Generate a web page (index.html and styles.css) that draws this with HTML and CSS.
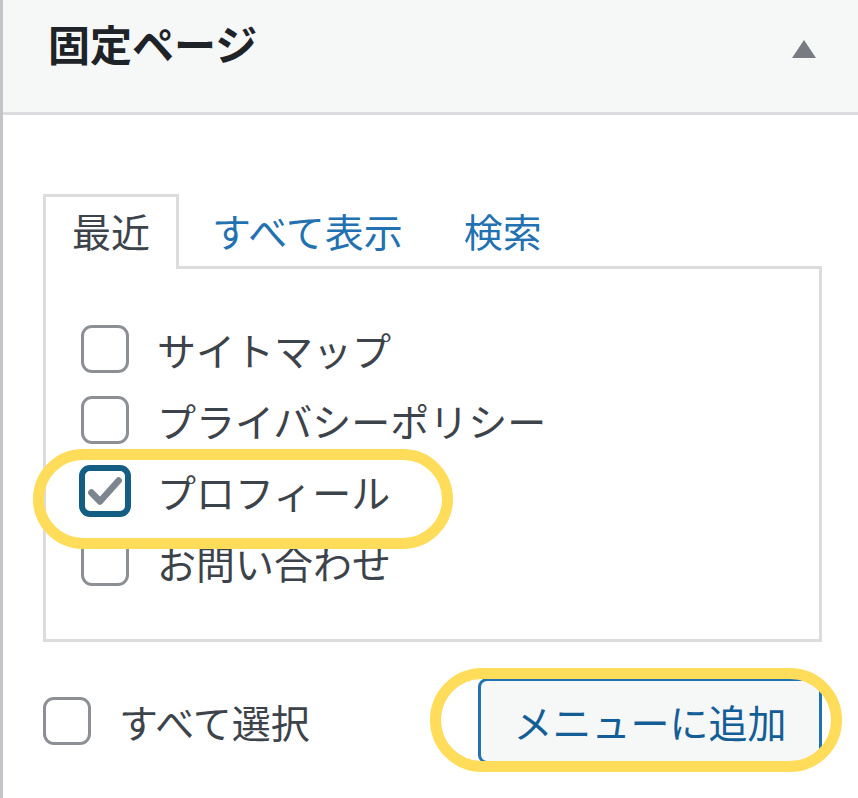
FILE: index.html
```html
<!DOCTYPE html>
<html lang="ja">
<head>
    <meta charset="UTF-8">
    <meta name="viewport" content="width=device-width, initial-scale=1.0">
    <title>固定ページ</title>
    <link rel="stylesheet" href="styles.css">
</head>
<body>
    <div class="postbox">
        <div class="postbox-header">
            <h2>固定ページ</h2>
            <span class="toggle"></span>
        </div>

        <div class="inside">
            <ul class="tabs">
                <li class="tab active">最近</li>
                <li class="tab"><a href="#">すべて表示</a></li>
                <li class="tab"><a href="#">検索</a></li>
            </ul>

            <div class="panel">
                <label class="item"><span class="check"></span>サイトマップ</label>
                <label class="item"><span class="check"></span>プライバシーポリシー</label>
                <label class="item"><span class="check checked">
                    <svg viewBox="0 0 20 20" width="40" height="40"><path d="M3.2 10.8l4.3 4.4 9.3-10.4" fill="none" stroke="#7d868f" stroke-width="3.3" stroke-linecap="round" stroke-linejoin="round"/></svg>
                </span>プロフィール</label>
                <label class="item"><span class="check"></span>お問い合わせ</label>
            </div>

            <div class="actions">
                <label class="item select-all"><span class="check"></span>すべて選択</label>
                <button class="button">メニューに追加</button>
            </div>
        </div>

        <!-- highlight marks drawn over the screenshot -->
        <div class="mark mark-profile"></div>
        <div class="mark mark-button"></div>
    </div>
</body>
</html>
```

FILE: styles.css
```css
body {
    margin: 0;
    padding: 0;
    background-color: #fff;
    font-family: "Noto Sans CJK JP", "Noto Sans", sans-serif;
    color: #3c434a;
}

.postbox {
    position: relative;
    height: 798px;
    border-left: 3px solid #c3c4c7;
    box-sizing: border-box;
    overflow: hidden;
}

.postbox-header {
    display: flex;
    align-items: center;
    justify-content: space-between;
    height: 112px;
    padding: 0 42px 0 45px;
    background-color: #f6f7f7;
    border-bottom: 3px solid #dcdcde;
}

.postbox-header h2 {
    margin: 0 0 26px 0;
    font-size: 42px;
    font-weight: 700;
    color: #1d2327;
    line-height: 1;
}

.toggle {
    width: 0;
    height: 0;
    margin-bottom: 14px;
    border-left: 12px solid transparent;
    border-right: 12px solid transparent;
    border-bottom: 18px solid #787c82;
}

.inside {
    padding: 79px 36px 0 40px;
}

.tabs {
    display: flex;
    margin: 0;
    padding: 0;
    list-style: none;
    position: relative;
    z-index: 1;
}

.tab {
    height: 72px;
    line-height: 66px;
    padding: 0 24px;
    margin-right: 7px;
    font-size: 39px;
    border: 3px solid transparent;
    border-bottom: none;
}

.tab a {
    color: #2271b1;
    text-decoration: none;
}

.tab.active {
    padding: 0 26px;
    margin-right: 6px;
    background-color: #fff;
    border-color: #dcdcde;
    color: #3c434a;
}

.panel {
    margin-top: -3px;
    height: 376px;
    padding: 44px 35px 0;
    border: 3px solid #dcdcde;
    box-sizing: border-box;
}

.item {
    display: flex;
    align-items: center;
    height: 71px;
    font-size: 39px;
    color: #3c434a;
}

.check {
    display: flex;
    align-items: center;
    justify-content: center;
    flex: none;
    width: 48px;
    height: 48px;
    margin-right: 28px;
    border: 3px solid #8c8f94;
    border-radius: 11px;
    box-sizing: border-box;
    background-color: #fff;
}

.check.checked {
    border: 6px solid #135e82;
    width: 52px;
    height: 52px;
    margin-left: -2px;
    margin-right: 26px;
}

.actions {
    display: flex;
    align-items: center;
    justify-content: space-between;
    margin-top: 36px;
}

.select-all .check {
    margin-right: 28px;
}

.button {
    width: 344px;
    height: 86px;
    padding: 0;
    font-family: inherit;
    font-size: 39px;
    color: #135e96;
    background-color: #f6f7f7;
    border: 3px solid #2271b1;
    border-radius: 9px;
}

.mark {
    position: absolute;
    border: 11px solid #ffdc5a;
    box-sizing: border-box;
    border-radius: 60px;
    pointer-events: none;
}

.mark-profile {
    left: 30px;
    top: 449px;
    width: 420px;
    height: 100px;
}

.mark-button {
    left: 427px;
    top: 668px;
    width: 412px;
    height: 104px;
}
```
